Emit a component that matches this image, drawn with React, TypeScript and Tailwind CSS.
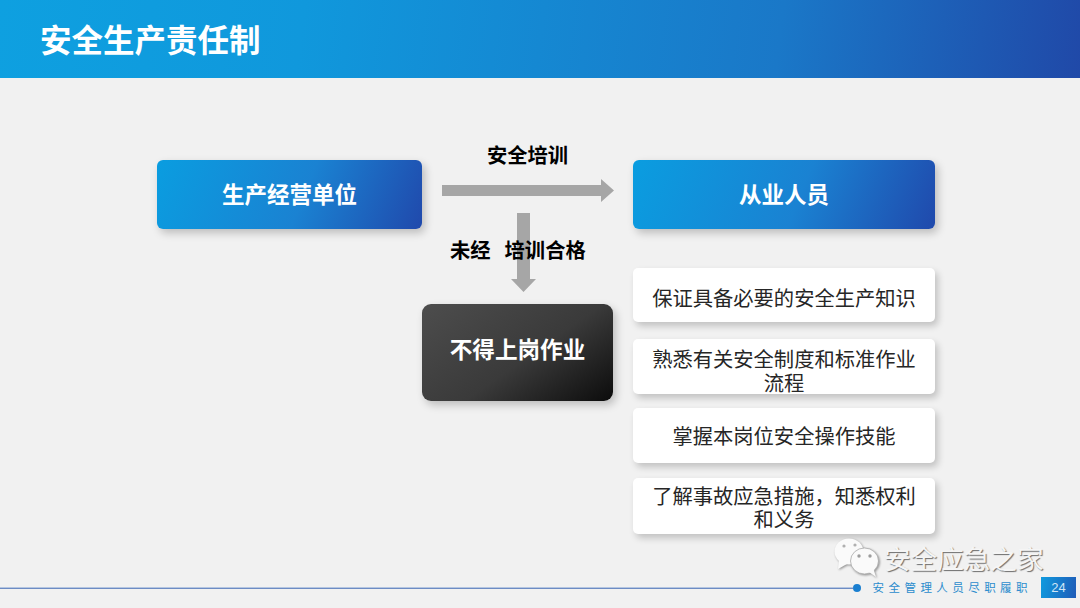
import React from 'react';

const cjk = "font-['Noto_Sans_CJK_SC','Microsoft_YaHei',sans-serif]";

const duties = [
  { text: '保证具备必要的安全生产知识', box: 'h-[54px] pt-[4px] leading-[24px]' },
  { text: '熟悉有关安全制度和标准作业流程', box: 'mt-[17px] h-[55px] pt-[7px] leading-[24px]' },
  { text: '掌握本岗位安全操作技能', box: 'mt-[14px] h-[55px] pb-[1px] leading-[24px]' },
  { text: '了解事故应急措施，知悉权利和义务', box: 'mt-[15px] h-[56px] pt-[2px] leading-[23px]' },
];

const BlueBox: React.FC<{ label: string; className?: string }> = ({ label, className }) => (
  <div
    className={`h-[69px] pb-[2px] rounded-[6px] flex items-center justify-center text-white font-bold text-[22.5px] bg-[linear-gradient(112deg,#0a9de0_0%,#1a82d2_55%,#2049ac_100%)] shadow-[3px_4px_8px_rgba(0,0,0,0.22)] ${className ?? ''}`}
  >
    {label}
  </div>
);

const WeChatIcon = () => (
  <svg width="46" height="40" viewBox="0 0 46 40" className="drop-shadow-[1px_1px_1px_rgba(0,0,0,0.4)]">
    <ellipse cx="15" cy="13.500" rx="14.500" ry="13" fill="#fafafa" />
    <polygon points="5,22 4,31 13,26" fill="#fafafa" />
    <ellipse cx="30.500" cy="23" rx="14" ry="13" fill="#fafafa" stroke="#a8a8a8" strokeWidth="0.8" />
    <polygon points="35,34 42,39 39.500,31" fill="#fafafa" />
    <circle cx="10" cy="8" r="1.600" fill="#b0b0b0" />
    <circle cx="21" cy="7" r="1.600" fill="#b0b0b0" />
    <circle cx="25" cy="18" r="1.700" fill="#9c9c9c" />
    <circle cx="36" cy="18" r="1.700" fill="#9c9c9c" />
  </svg>
);

export default function App() {
  return (
    <div className={`relative w-[1080px] h-[608px] overflow-hidden flex flex-col bg-[#f1f1f1] ${cjk}`}>
      <header className="h-[78px] shrink-0 pl-[40px] pb-[1px] flex items-center bg-[linear-gradient(97deg,#0ea0e0_0%,#1098dc_28%,#1a78c8_72%,#2049a8_100%)]">
        <h1 className="text-white font-bold text-[31.5px] leading-none">安全生产责任制</h1>
      </header>

      <main className="flex-1 flex items-start pl-[157px] pt-[82px]">
        <BlueBox label="生产经营单位" className="w-[265px]" />

        <div className="relative w-[211px] h-[241px]">
          {/* arrows sit behind the labels */}
          <svg width="176" height="24" viewBox="0 0 176 24" className="absolute left-[20px] top-[19px]">
            <polygon points="0,6 159,6 159,0 172,11.500 159,23 159,17 0,17" fill="#a6a6a6" />
          </svg>
          <svg width="28" height="82" viewBox="0 0 28 82" className="absolute left-[88px] top-[53px]">
            <polygon points="7,0 20,0 20,66 26,66 13.500,79 1,66 7,66" fill="#a6a6a6" />
          </svg>
          <div className="absolute left-[65px] top-[-21px] text-[20.3px] leading-[30px] font-bold text-black whitespace-nowrap">
            安全培训
          </div>
          <div className="absolute left-[28px] top-[74px] text-[20.3px] leading-[30px] font-bold text-black whitespace-nowrap">
            未经<span className="inline-block w-[14px]" />培训合格
          </div>
          <div className="absolute left-0 top-[144px] w-[191px] h-[97px] pb-[7px] rounded-[9px] flex items-center justify-center text-white font-bold text-[22.6px] bg-[linear-gradient(145deg,#4d4d4d_0%,#3a3a3a_55%,#0c0c0c_100%)] shadow-[3px_4px_8px_rgba(0,0,0,0.22)]">
            不得上岗作业
          </div>
        </div>

        <div className="w-[302px] flex flex-col">
          <BlueBox label="从业人员" />
          <div className="mt-[39px] flex flex-col">
            {duties.map((d) => (
              <div
                key={d.text}
                className={`${d.box} px-[18px] rounded-[5px] bg-white flex items-center justify-center text-center text-[20.3px] text-[#262626] shadow-[3px_4px_7px_rgba(0,0,0,0.2)]`}
              >
                {d.text}
              </div>
            ))}
          </div>
        </div>
      </main>

      <footer className="shrink-0 h-[21px] mb-[10px] flex items-center">
        <div className="flex-1 mt-[1px] h-[2px] border-t border-[#b5c6e0] bg-[#6d8cc4]" />
        <div className="w-[8px] h-[8px] rounded-full bg-[#1a7fd0]" />
        <div className="ml-[12px] text-[11.500px] leading-none tracking-[4.440px] text-[#2b8ccd] whitespace-nowrap">
          安全管理人员尽职履职
        </div>
        <div className="ml-[9px] mr-[4px] w-[35px] h-[21px] flex items-center justify-center text-[13px] text-[#cfe6f6] font-['Liberation_Sans',sans-serif] bg-[linear-gradient(100deg,#0f9ade,#1f5cb8)]">
          24
        </div>
      </footer>

      {/* watermark on top of the slide */}
      <div className="absolute left-[834px] top-[538px] flex items-center gap-[4px]">
        <WeChatIcon />
        <span className="text-[26.6px] leading-none text-[#f5f5f5] whitespace-nowrap [text-shadow:1px_1px_1px_rgba(0,0,0,0.55)]">
          安全应急之家
        </span>
      </div>
    </div>
  );
}
